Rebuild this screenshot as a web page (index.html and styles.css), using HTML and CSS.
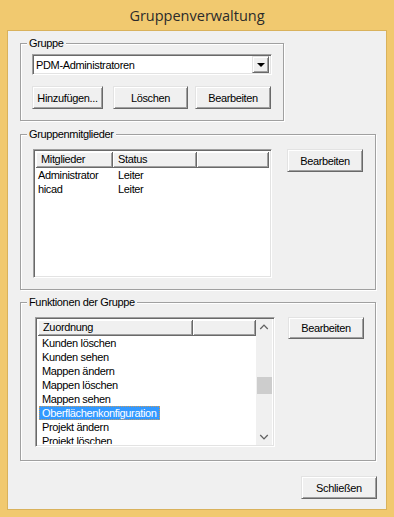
FILE: index.html
```html
<!DOCTYPE html>
<html lang="de">
<head>
    <meta charset="UTF-8">
    <title>Gruppenverwaltung</title>
    <link rel="stylesheet" href="styles.css">
</head>
<body>
    <div class="window">
        <div class="titlebar">Gruppenverwaltung</div>
        <div class="client">

            <div class="group group-small">
                <div class="group-title">Gruppe</div>
                <div class="group-body g1">
                    <div class="combo">
                        <span class="combo-text">PDM-Administratoren</span>
                        <span class="combo-btn"><span class="tri"></span></span>
                    </div>
                    <div class="btn-row">
                        <button class="btn b-add">Hinzufügen...</button>
                        <button class="btn b-del">Löschen</button>
                        <button class="btn b-edit">Bearbeiten</button>
                    </div>
                </div>
            </div>

            <div class="group group-2">
                <div class="group-title">Gruppenmitglieder</div>
                <div class="group-body g2">
                    <div class="list list-members">
                        <div class="list-head">
                            <div class="hcell" style="width: 77px">Mitglieder</div>
                            <div class="hcell" style="width: 84px">Status</div>
                            <div class="hcell hfill"></div>
                        </div>
                        <div class="row"><span class="c1">Administrator</span><span>Leiter</span></div>
                        <div class="row"><span class="c1">hicad</span><span>Leiter</span></div>
                    </div>
                    <button class="btn side-btn">Bearbeiten</button>
                </div>
            </div>

            <div class="group group-3">
                <div class="group-title">Funktionen der Gruppe</div>
                <div class="group-body g3">
                    <div class="list list-funcs">
                        <div class="list-main">
                            <div class="list-head">
                                <div class="hcell" style="width: 155px">Zuordnung</div>
                                <div class="hcell hfill"></div>
                            </div>
                            <div class="rows">
                                <div class="row"><span class="item">Kunden löschen</span></div>
                                <div class="row"><span class="item">Kunden sehen</span></div>
                                <div class="row"><span class="item">Mappen ändern</span></div>
                                <div class="row"><span class="item">Mappen löschen</span></div>
                                <div class="row"><span class="item">Mappen sehen</span></div>
                                <div class="row"><span class="item selected">Oberflächenkonfiguration</span></div>
                                <div class="row"><span class="item">Projekt ändern</span></div>
                                <div class="row"><span class="item">Projekt löschen</span></div>
                            </div>
                        </div>
                        <div class="scrollbar">
                            <svg class="arrow" width="17" height="17" viewBox="0 0 17 17"><path d="M4.5 10 L8.5 6 L12.5 10" fill="none" stroke="#606060" stroke-width="1.4"/></svg>
                            <div class="track"><div class="thumb"></div></div>
                            <svg class="arrow" width="17" height="17" viewBox="0 0 17 17"><path d="M4.5 7 L8.5 11 L12.5 7" fill="none" stroke="#606060" stroke-width="1.4"/></svg>
                        </div>
                    </div>
                    <button class="btn side-btn">Bearbeiten</button>
                </div>
            </div>

            <div class="footer">
                <button class="btn b-close">Schließen</button>
            </div>
        </div>
    </div>
</body>
</html>
```

FILE: styles.css
```css
body {
    margin: 0;
    background: #f1c96f;
    font-family: "Liberation Sans", Arial, sans-serif;
    font-size: 11px;
    color: #000;
}
.window {
    width: 394px;
    height: 517px;
    display: flex;
    flex-direction: column;
}
.titlebar {
    height: 30px;
    display: flex;
    justify-content: center;
    align-items: center;
    font-family: "Open Sans", "Noto Sans", sans-serif;
    font-size: 14.5px;
    color: #2b2b2b;
    padding-top: 1px;
    box-sizing: border-box;
}
.client {
    margin: 0 7px 7px 7px;
    border: 1px solid #d9b25c;
    background: #f0f0f0;
    flex: 1;
    padding: 12px 0 0 12px;
    letter-spacing: -0.35px;
}

/* gruppen-rahmen */
.group {
    border: 1px solid #a0a0a0;
    box-shadow: 1px 1px 0 #fff, inset 1px 1px 0 #fff;
    width: 356px;
    box-sizing: border-box;
}
.group-small {
    width: 264px;
}
.group-2 {
    margin-top: 13px;
}
.group-3 {
    margin-top: 12px;
}
.group-title {
    width: fit-content;
    margin: -7px 0 0 6px;
    padding: 0 2px;
    line-height: 13px;
    background: #f0f0f0;
}
.g1 {
    padding: 4px 11px 11px 11px;
}
.g2 {
    display: flex;
    align-items: flex-start;
    padding: 8px 0 11px 12px;
}
.g3 {
    display: flex;
    align-items: flex-start;
    padding: 8px 0 13px 14px;
}

/* combobox */
.combo {
    width: 240px;
    height: 21px;
    box-sizing: border-box;
    display: flex;
    align-items: center;
    background: #fff;
    border: 1px solid;
    border-color: #a0a0a0 #fff #fff #a0a0a0;
    box-shadow: inset 1px 1px 0 #696969, inset -1px -1px 0 #e3e3e3;
}
.combo-text {
    flex: 1;
    padding-left: 3px;
}
.combo-btn {
    width: 17px;
    height: 17px;
    margin-right: 2px;
    box-sizing: border-box;
    background: #f0f0f0;
    border: 1px solid;
    border-color: #e3e3e3 #696969 #696969 #e3e3e3;
    box-shadow: inset 1px 1px 0 #fff, inset -1px -1px 0 #a0a0a0;
    display: flex;
    justify-content: center;
    align-items: center;
}
.tri {
    width: 0;
    height: 0;
    border-left: 4px solid transparent;
    border-right: 4px solid transparent;
    border-top: 4px solid #000;
    margin-top: 1px;
}

/* knoepfe */
.btn {
    font-family: inherit;
    font-size: 11px;
    letter-spacing: -0.35px;
    color: #000;
    background: #f0f0f0;
    height: 23px;
    width: 76px;
    padding: 0;
    border: 1px solid;
    border-color: #e3e3e3 #696969 #696969 #e3e3e3;
    box-shadow: inset 1px 1px 0 #fff, inset -1px -1px 0 #a0a0a0;
    border-radius: 0;
}
.btn-row {
    display: flex;
    margin-top: 11px;
}
.b-add {
    width: 71px;
}
.b-del {
    width: 75px;
    margin-left: 10px;
}
.b-edit {
    margin-left: 7px;
}
.side-btn {
    margin-left: 15px;
}
.g3 .side-btn {
    margin-left: 13px;
    height: 22px;
}
.footer {
    display: flex;
    justify-content: flex-end;
    padding-right: 9px;
    margin-top: 15px;
}

/* listen */
.list {
    background: #fff;
    box-sizing: border-box;
    border: 1px solid;
    border-color: #a0a0a0 #fff #fff #a0a0a0;
    box-shadow: inset 1px 1px 0 #696969, inset -1px -1px 0 #e3e3e3;
    padding: 2px 2px 2px 2px;
    overflow: hidden;
}
.list-members {
    width: 239px;
    height: 129px;
}
.list-funcs {
    width: 240px;
    height: 130px;
    display: flex;
}
.list-main {
    flex: 1;
    overflow: hidden;
}
.list-head {
    display: flex;
    height: 16px;
}
.hcell {
    box-sizing: border-box;
    height: 16px;
    line-height: 15px;
    padding-left: 5px;
    background: #f0f0f0;
    border-right: 1px solid #696969;
    border-bottom: 1px solid #696969;
    box-shadow: inset 1px 1px 0 #fff, inset -1px -1px 0 #a0a0a0;
}
.hfill {
    flex: 1;
}
.row {
    height: 14px;
    line-height: 14px;
    display: flex;
    white-space: nowrap;
}
.list-members .row {
    padding-left: 2px;
}
.c1 {
    width: 80px;
}
.list-funcs .row {
    padding-left: 1px;
}
.item {
    padding: 0 2px;
    border: 1px dotted transparent;
    line-height: 12px;
}
.selected {
    background: #3399ff;
    color: #fff;
    border-color: #c99a5c;
}

/* scrollbar */
.scrollbar {
    width: 16px;
    background: #f0f0f0;
    display: flex;
    flex-direction: column;
    margin: -1px 0 -1px 0;
}
.arrow {
    display: block;
    width: 16px;
}
.track {
    flex: 1;
    padding-top: 41px;
}
.thumb {
    margin-left: 1px;
    width: 15px;
    height: 17px;
    background: #cdcdcd;
}
```
